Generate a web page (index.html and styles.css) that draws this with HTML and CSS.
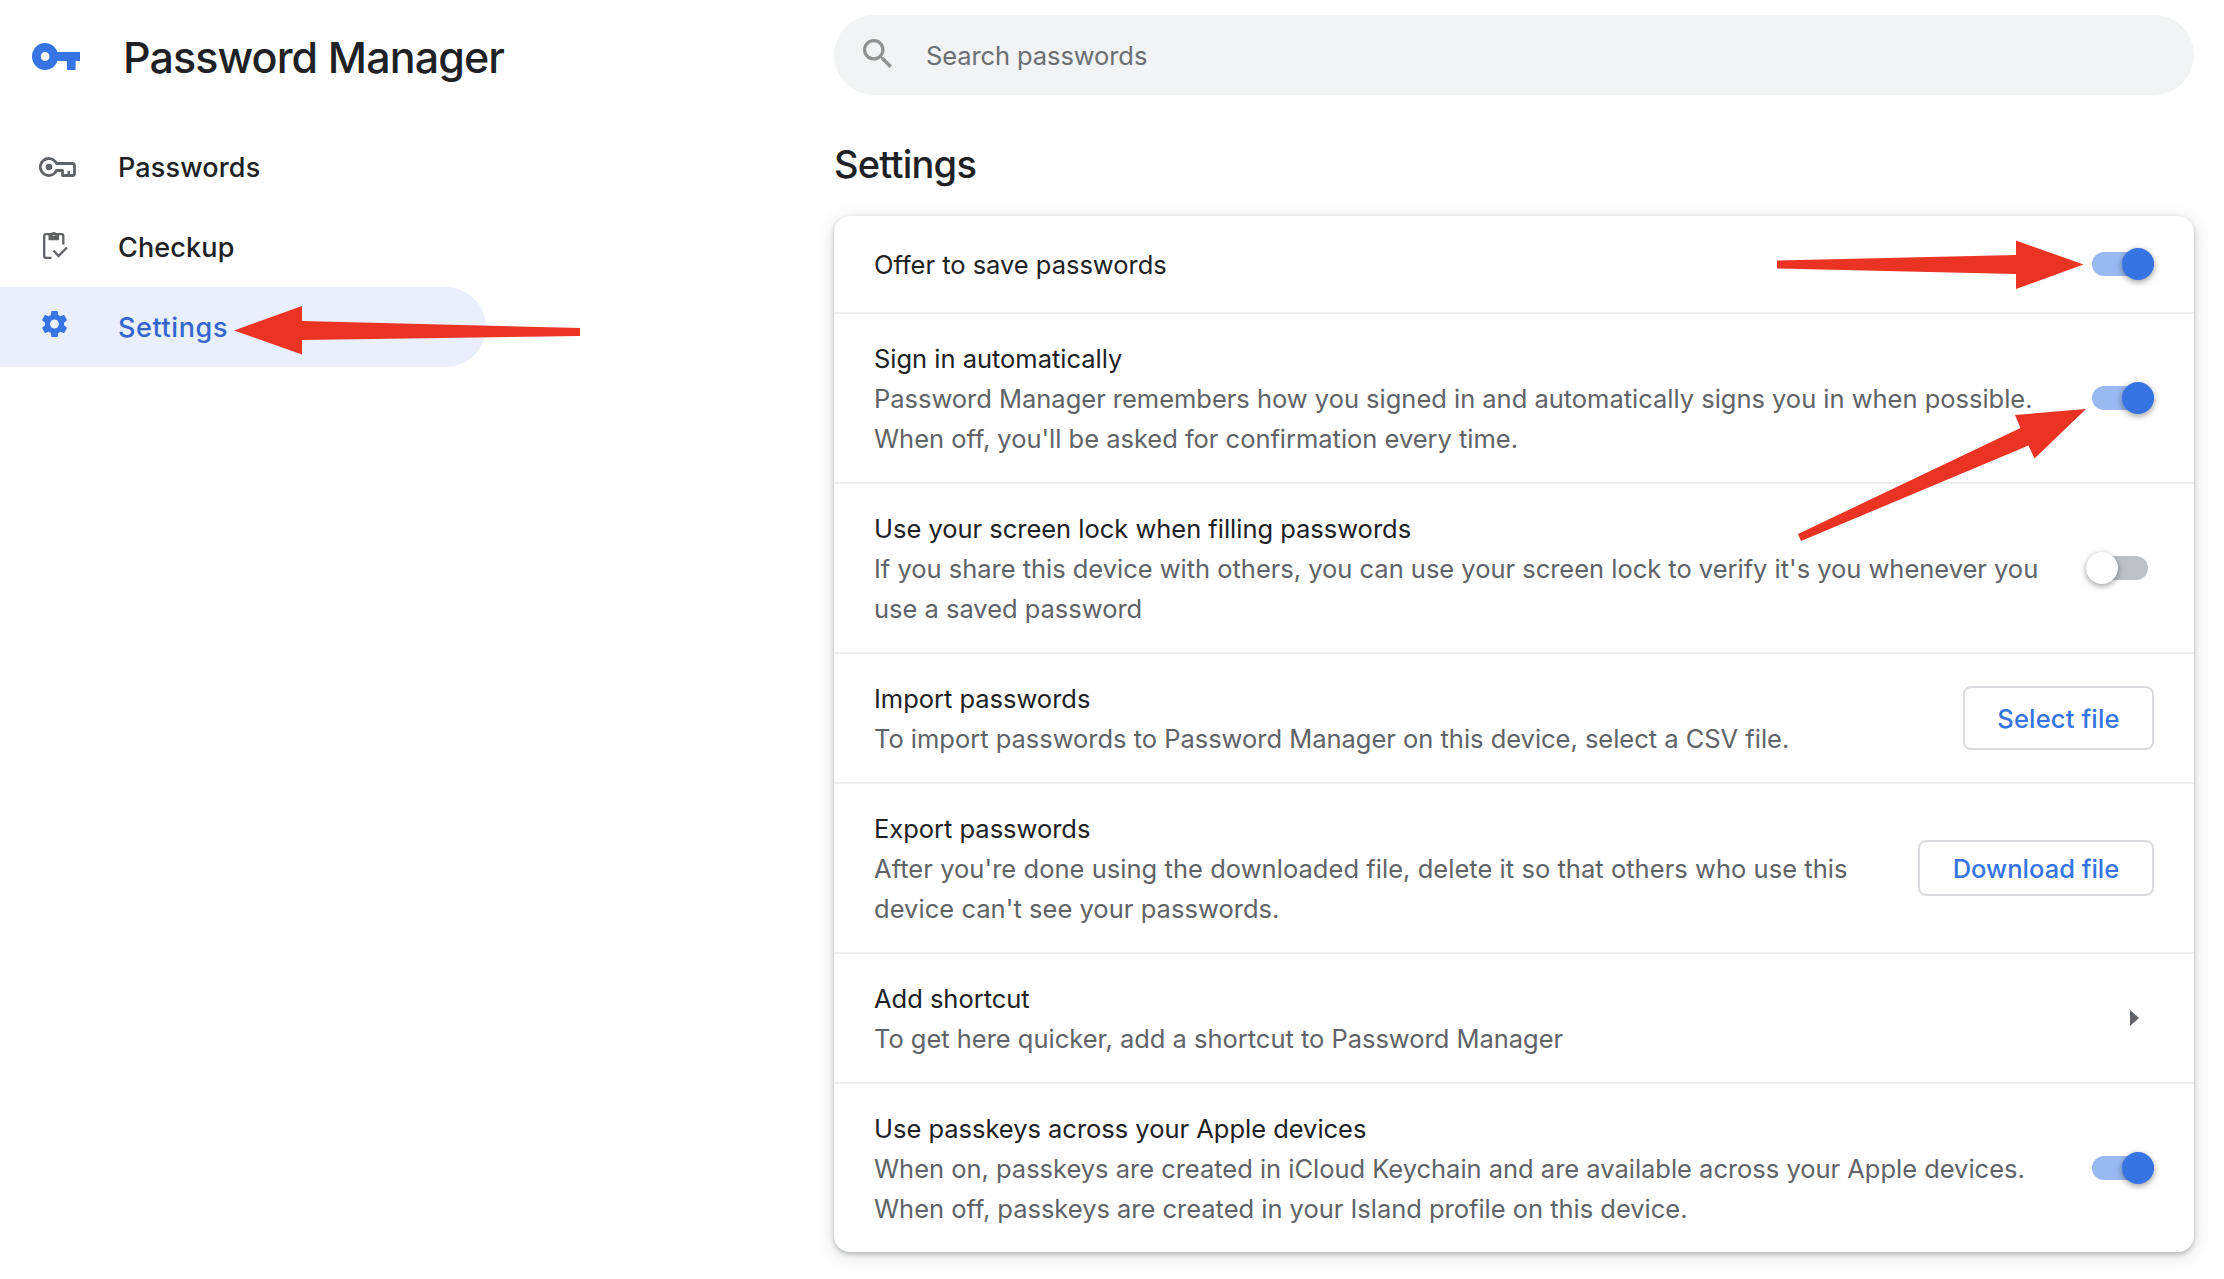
FILE: index.html
```
<!DOCTYPE html>
<html lang="en">
  <head>
    <meta charset="UTF-8" />
    <title>Password Manager</title>
    <link rel="stylesheet" href="styles.css">
  </head>
  <body>
    <aside class="sidebar">
      <header class="brand">
        <svg class="brand-icon" viewBox="1 6 22 12" preserveAspectRatio="none">
          <path d="M12.65 10C11.83 7.67 9.61 6 7 6c-3.31 0-6 2.69-6 6s2.69 6 6 6c2.61 0 4.83-1.67 5.65-4H17v4h4v-4h2v-4H12.65zM7 14c-1.1 0-2-.9-2-2s.9-2 2-2 2 .9 2 2-.9 2-2 2z" />
        </svg>
        <h1>Password Manager</h1>
      </header>
      <nav class="menu">
        <a class="menu-item">
          <svg class="menu-icon icon-key" viewBox="0 0 37 20">
            <path fill="none" stroke="currentColor" stroke-width="2.800" stroke-linejoin="round" d="M17.500 6.500A8.500 8.500 0 1 0 17.500 13.500H23.500V18.500H33.500Q35.500 18.500 35.500 16.500V8.500Q35.500 6.500 33.500 6.500Z" />
            <path d="M28.500 14h2.500V18h-2.500z" />
            <circle cx="10" cy="10" r="3.300" />
          </svg>
          <span>Passwords</span>
        </a>
        <a class="menu-item">
          <svg class="menu-icon icon-check" viewBox="0 0 25 28">
            <path fill="none" stroke="currentColor" stroke-width="2.300" d="M8.500 26.800H3Q1.200 26.800 1.200 25V5Q1.200 3.200 3 3.200H18.500Q20.300 3.200 20.300 5V13.500M10.500 19.500L15.500 25L24 16.500" />
            <path fill-rule="evenodd" d="M5.500 3.200H7.500A3.500 3.500 0 0 1 14 3.200H16V9.300H5.500zM10.700 2.500a1.300 1.300 0 1 0 .01 0z" />
          </svg>
          <span>Checkup</span>
        </a>
        <a class="menu-item selected">
          <svg class="menu-icon icon-gear" viewBox="2.200 2 19.600 20" preserveAspectRatio="none">
            <path d="M19.430 12.980c.04-.32.07-.64.07-.98s-.03-.66-.07-.98l2.110-1.650c.19-.15.24-.42.12-.64l-2-3.460c-.12-.22-.39-.3-.61-.22l-2.490 1c-.52-.4-1.080-.73-1.690-.98l-.38-2.650C14.460 2.180 14.250 2 14 2h-4c-.25 0-.46.18-.49.42l-.38 2.650c-.61.25-1.170.59-1.690.98l-2.490-1c-.23-.09-.49 0-.61.22l-2 3.460c-.13.22-.07.49.12.64l2.110 1.650c-.04.32-.07.65-.07.98s.03.66.07.98l-2.110 1.650c-.19.15-.24.42-.12.64l2 3.460c.12.22.39.3.61.22l2.490-1c.52.4 1.080.73 1.690.98l.38 2.650c.03.24.24.42.49.42h4c.25 0 .46-.18.49-.42l.38-2.650c.61-.25 1.170-.59 1.690-.98l2.490 1c.23.09.49 0 .61-.22l2-3.460c.12-.22.07-.49-.12-.64l-2.110-1.650zM12 15.500c-1.930 0-3.500-1.570-3.500-3.500s1.570-3.500 3.500-3.500 3.500 1.570 3.500 3.500-1.570 3.500-3.500 3.500z" />
          </svg>
          <span>Settings</span>
        </a>
      </nav>
    </aside>

    <main class="content">
      <div class="search">
        <svg class="search-icon" viewBox="3 3 17.500 17.500">
          <path d="M15.500 14h-.79l-.28-.27C15.410 12.590 16 11.110 16 9.500 16 5.910 13.090 3 9.500 3S3 5.910 3 9.500 5.910 16 9.500 16c1.610 0 3.090-.59 4.230-1.570l.27.28v.79l5 4.990L20.490 19l-4.990-5zm-6 0C7.010 14 5 11.990 5 9.500S7.010 5 9.500 5 14 7.010 14 9.500 11.990 14 9.500 14z" />
        </svg>
        <span>Search passwords</span>
      </div>

      <h2>Settings</h2>

      <section class="card">
        <div class="row">
          <div class="text">
            <div class="label">Offer to save passwords</div>
          </div>
          <div class="toggle on"></div>
        </div>
        <div class="row">
          <div class="text">
            <div class="label">Sign in automatically</div>
            <div class="sub">Password Manager remembers how you signed in and automatically signs you in when possible.<br>When off, you'll be asked for confirmation every time.</div>
          </div>
          <div class="toggle on"></div>
        </div>
        <div class="row">
          <div class="text">
            <div class="label">Use your screen lock when filling passwords</div>
            <div class="sub">If you share this device with others, you can use your screen lock to verify it's you whenever you<br>use a saved password</div>
          </div>
          <div class="toggle"></div>
        </div>
        <div class="row">
          <div class="text">
            <div class="label">Import passwords</div>
            <div class="sub">To import passwords to Password Manager on this device, select a CSV file.</div>
          </div>
          <button class="btn btn-select">Select file</button>
        </div>
        <div class="row">
          <div class="text">
            <div class="label">Export passwords</div>
            <div class="sub sub-export">After you're done using the downloaded file, delete it so that others who use this<br>device can't see your passwords.</div>
          </div>
          <button class="btn btn-download">Download file</button>
        </div>
        <div class="row">
          <div class="text">
            <div class="label">Add shortcut</div>
            <div class="sub">To get here quicker, add a shortcut to Password Manager</div>
          </div>
          <div class="chevron"></div>
        </div>
        <div class="row">
          <div class="text">
            <div class="label">Use passkeys across your Apple devices</div>
            <div class="sub">When on, passkeys are created in iCloud Keychain and are available across your Apple devices.<br>When off, passkeys are created in your Island profile on this device.</div>
          </div>
          <div class="toggle on"></div>
        </div>
      </section>
    </main>

    <!-- Arrows pointing at the options -->
    <svg class="arrows" viewBox="0 0 2224 1279">
      <polygon points="234,330.500 302,306 302,321 580,328 580,336 302,340 302,354.500" />
      <polygon points="2083.500,264.500 2016,240.500 2016,255 1777,260.500 1777,268.500 2016,274 2016,289" />
      <polygon points="2086,409 2015,415 2020.500,428 1798,534 1801,541 2028.500,445.500 2034.500,458.500" />
    </svg>
  </body>
</html>
```
FILE: styles.css
```
* {
  box-sizing: border-box;
}
body {
  margin: 0;
  display: flex;
  width: 2224px;
  height: 1279px;
  overflow: hidden;
  background: #fff;
  color: #202124;
  font-family: Inter, "Liberation Sans", sans-serif;
  font-size: 25.5px;
  line-height: 40px;
}
h1,
h2 {
  margin: 0;
  font-weight: 500;
}
.sidebar {
  width: 834px;
}
.brand {
  display: flex;
  align-items: center;
  height: 112px;
  padding-left: 32px;
  gap: 43px;
}
.brand-icon {
  width: 48px;
  height: 27px;
  fill: #3574e2;
}
.brand h1 {
  padding-top: 1px;
  font-size: 43px;
  letter-spacing: -0.9px;
}
.menu {
  padding-top: 15px;
}
.menu-item {
  display: flex;
  align-items: center;
  width: 486px;
  height: 80px;
  padding-left: 39px;
  border-radius: 0 40px 40px 0;
  font-size: 27px;
  font-weight: 500;
  letter-spacing: 0.15px;
}
.menu-item span {
  margin-left: auto;
  padding-top: 2px;
  width: 368px;
}
.menu-item.selected {
  background: #e9effd;
  color: #3367cf;
  letter-spacing: 0.6px;
}
.menu-icon {
  color: #5f6368;
  fill: currentColor;
}
.icon-key {
  width: 37px;
  height: 20px;
}
.icon-check {
  width: 25px;
  height: 28px;
  margin: 0 0 5px 4px;
}
.icon-gear {
  width: 25px;
  height: 26px;
  margin: 0 0 6px 3px;
  color: #3574e2;
}
.content {
  width: 1360px;
  padding-top: 15px;
}
.search {
  display: flex;
  align-items: center;
  gap: 34px;
  height: 80px;
  padding-left: 29px;
  border-radius: 40px;
  background: #f1f3f4;
  color: #6b6e73;
  letter-spacing: -0.1px;
}
.search span {
  padding-top: 2px;
}
.search-icon {
  width: 29px;
  height: 29px;
  margin-bottom: 3px;
  fill: #909194;
}
h2 {
  margin: 49px 0 32px;
  font-size: 38px;
  letter-spacing: -0.75px;
}
.card {
  border-radius: 16px;
  background: #fff;
  box-shadow: 0 2px 4px rgba(60, 64, 67, 0.3), 0 4px 16px 2px rgba(60, 64, 67, 0.15);
}
.row {
  display: flex;
  align-items: center;
  justify-content: space-between;
  padding: 24px 40px;
  white-space: nowrap;
}
.row:first-child {
  padding: 28px 40px;
}
.row + .row {
  border-top: 2px solid #eeeeef;
}
.text {
  margin: 1px 0 -1px;
  letter-spacing: -0.02px;
}
.sub {
  color: #5f6368;
}
.sub-export {
  letter-spacing: 0.04px;
}
.toggle {
  display: flex;
  align-items: center;
  width: 62px;
  height: 24px;
  margin-right: 6px;
  border-radius: 12px;
  background: #bdc1c6;
}
.toggle::before {
  content: "";
  width: 32px;
  height: 32px;
  border-radius: 50%;
  background: #fff;
  box-shadow: 0 2px 6px rgba(0, 0, 0, 0.4);
}
.toggle.on {
  justify-content: flex-end;
  margin-right: 0;
  background: #9ab9f0;
}
.toggle.on::before {
  background: #3574e2;
}
.btn {
  padding: 2px 0 0;
  border: 2px solid #dadce0;
  border-radius: 8px;
  background: #fff;
  color: #3574e2;
  font: inherit;
  font-weight: 500;
}
.btn-select {
  width: 191px;
  height: 64px;
  letter-spacing: 0.15px;
}
.btn-download {
  width: 236px;
  height: 56px;
}
.chevron {
  margin-right: 15px;
  border-left: 9px solid #5f6368;
  border-top: 8px solid transparent;
  border-bottom: 8px solid transparent;
}
.arrows {
  position: absolute;
  top: 0;
  left: 0;
  width: 2224px;
  height: 1279px;
  fill: #ea3323;
  pointer-events: none;
}
```
